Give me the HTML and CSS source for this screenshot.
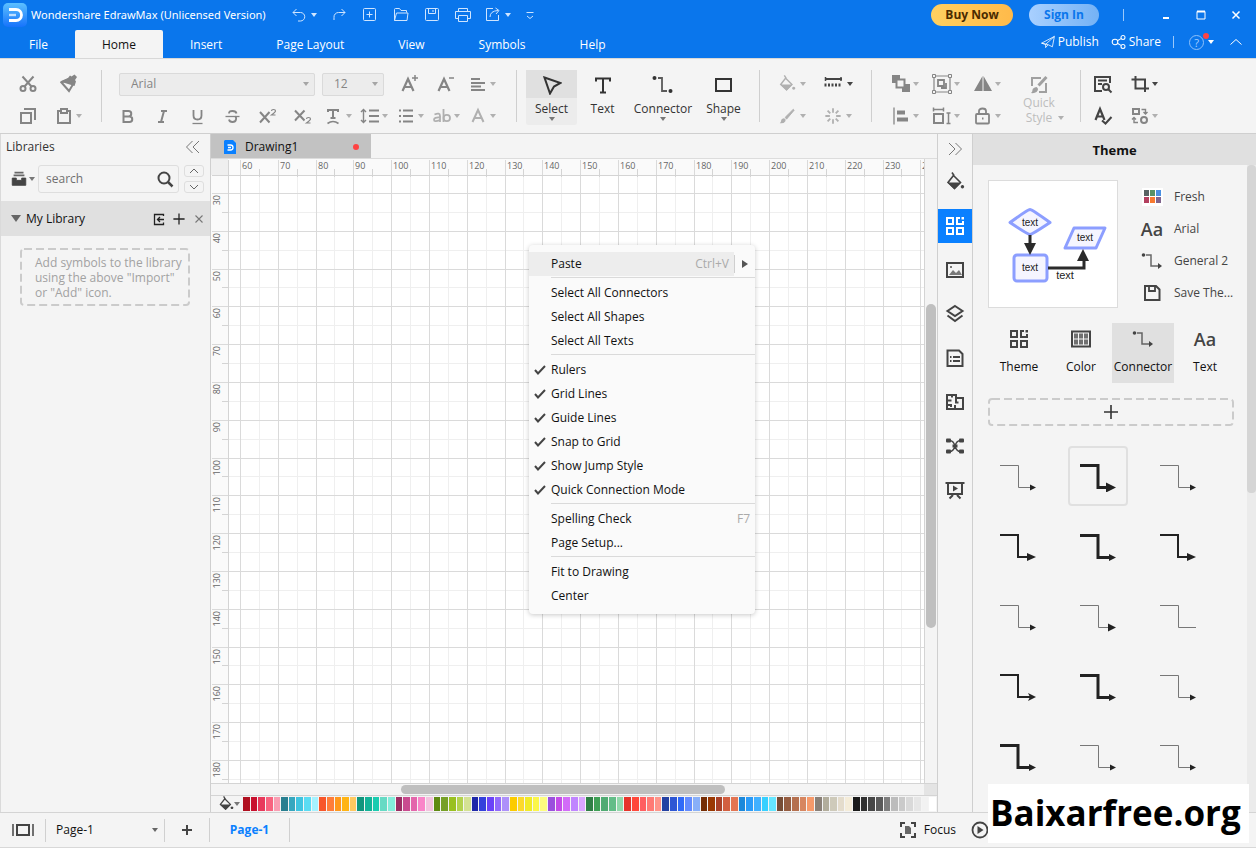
FILE: index.html
```html
<!DOCTYPE html>
<html lang="en">
<head>
<meta charset="utf-8">
<title>Wondershare EdrawMax</title>
<link rel="stylesheet" href="styles.css">
</head>
<body>
<svg class="defs" aria-hidden="true">
  <symbol id="caret" viewBox="0 0 6 4"><path d="M0 0h6L3 4z" fill="currentColor" stroke="none"/></symbol>
  <symbol id="undo" viewBox="0 0 20 20"><path d="M7.500 4L4 7.500 7.500 11M4 7.500h7.500a4 4 0 0 1 0 8.500H9"/></symbol>
  <symbol id="redo" viewBox="0 0 20 20"><path d="M12.500 4L16 7.500 12.500 11M16 7.500H9.500a4.500 4.500 0 0 0-4.500 5V15"/></symbol>
  <symbol id="new" viewBox="0 0 20 20"><rect x="3.500" y="3.500" width="12" height="12" rx="1"/><path d="M9.500 6.500v6M6.500 9.500h6"/></symbol>
  <symbol id="folder" viewBox="0 0 20 20"><path d="M3.500 15.500v-11q0-1 1-1h4l1.500 2h5.500v2M3.500 15.500l2-7.500h11.500l-1 7.500z"/></symbol>
  <symbol id="save" viewBox="0 0 20 20"><rect x="3.500" y="3.500" width="13" height="12" rx="1"/><path d="M6.500 3.500v5h7v-5M11 5v2"/></symbol>
  <symbol id="print" viewBox="0 0 20 20"><path d="M5.500 6.500v-3h9v3M5.500 13.500h-3v-7h15v7h-3M5.500 10.500h9v6h-9z"/></symbol>
  <symbol id="export" viewBox="0 0 20 20"><path d="M10 3.500H3.500v12h12V10M7 12q0-6 8-6.500M12.500 3l3.500 2.500-3 3.500"/></symbol>
  <symbol id="more" viewBox="0 0 20 20"><path d="M6.500 7.500h7M7 11l3 2.500 3-2.500"/></symbol>
  <symbol id="cut" viewBox="0 0 20 20"><g stroke-width="2"><circle cx="5" cy="14.500" r="2.500"/><circle cx="15" cy="14.500" r="2.500"/><path d="M4.500 2.500l9 10M15.500 2.500l-9 10"/></g></symbol>
  <symbol id="painter" viewBox="0 0 20 20"><path d="M3.500 8.500L11 5l4.500 4.500L11 17z" stroke-width="2"/><path d="M2 7.500L10 4l2-2.500 1.500 1L16.500.500 19 3l-2 3 1 1.500L16.500 12z" fill="currentColor" stroke="none"/></symbol>
  <symbol id="copy" viewBox="0 0 20 20"><path d="M3 7h10v10H3zM6 3h11v11" stroke-width="2"/></symbol>
  <symbol id="paste" viewBox="0 0 20 20"><path d="M7 5H4v12h12V5h-3M7 3h6v4H7z" stroke-width="2"/></symbol>
  <symbol id="bigA" viewBox="0 0 20 20"><path d="M2.500 17L8 5l5.500 12M5 13h6" stroke-width="2.200"/><path d="M12 4h6M15 1v6" stroke-width="1.500"/></symbol>
  <symbol id="smallA" viewBox="0 0 20 20"><path d="M2.500 17L8 5l5.500 12M5 13h6" stroke-width="2.200"/><path d="M13 4h5" stroke-width="1.500"/></symbol>
  <symbol id="align" viewBox="0 0 20 20"><path d="M3 5h9M3 9h14M3 12.500h10M3 16h14" stroke-width="1.800"/></symbol>
  <symbol id="bold" viewBox="0 0 20 20"><path d="M5.500 5h5a2.700 2.700 0 0 1 0 5.500h-5zM5.500 10.500h6a2.700 2.700 0 0 1 0 5.500h-6z" stroke-width="2"/></symbol>
  <symbol id="italic" viewBox="0 0 20 20"><path d="M8 5h6M5 16h6M11 5l-3 11" stroke-width="2"/></symbol>
  <symbol id="under" viewBox="0 0 20 20"><path d="M5.500 4v5.500q0 4 4 4t4-4V4" stroke-width="1.800"/><path d="M4.500 17.500h10" stroke-width="1.300"/></symbol>
  <symbol id="strike" viewBox="0 0 20 20"><path d="M13.500 7.500Q13 5 9.500 5 6 5 6 7.500M6 13.500q.500 2.500 3.500 2.500t3.500-2.500-1-2.800" stroke-width="1.800"/><path d="M2.500 10.500h14" stroke-width="1.300"/></symbol>
  <symbol id="sup" viewBox="0 0 20 20"><path d="M2 6l9.500 10.500M11.500 6L2 16.500" stroke-width="2"/><path d="M13.500 5q0-1.500 2-1.500t2 1.500q0 1-4 4h4" stroke-width="1.200"/></symbol>
  <symbol id="sub" viewBox="0 0 20 20"><path d="M2 4.500l9.500 10M11.500 4.500l-9.500 10" stroke-width="2"/><path d="M13.500 13q0-1.500 2-1.500t2 1.500q0 1-4 4h4" stroke-width="1.200"/></symbol>
  <symbol id="tdeco" viewBox="0 0 20 20"><path d="M4 6V4h10v2M9 4v8M6.500 12h5" stroke-width="2"/><path d="M3.500 17.500q5.500-4 11 0" stroke-width="1.600"/></symbol>
  <symbol id="spacing" viewBox="0 0 20 20"><path d="M9 4.500h10M9 10h10M9 15.500h10" stroke-width="1.800"/><path d="M3.500 3.500v13M1 6l2.500-2.500L6 6M1 14l2.500 2.500L6 14" stroke-width="1.400"/></symbol>
  <symbol id="list" viewBox="0 0 20 20"><path d="M7 4.500h10M7 10h10M7 15.500h10M3 4.500h2M3 10h2M3 15.500h2" stroke-width="1.800"/></symbol>
  <symbol id="ab" viewBox="0 0 20 20"><path d="M2.500 8.500Q8 6 8 10v6M8 11.500q-6-.500-6 2.200T8 14M11.500 3v13" stroke-width="1.800"/><circle cx="14.800" cy="12" r="3.200" stroke-width="1.800"/></symbol>
  <symbol id="fontcolor" viewBox="0 0 20 20"><path d="M4.500 16L10 4l5.500 12M6.500 12h7" stroke-width="2"/></symbol>
  <symbol id="cursor" viewBox="0 0 20 20"><path d="M2.500 2.500l16 5.500-6.500 3.500-4 7z" stroke-width="2"/></symbol>
  <symbol id="textT" viewBox="0 0 20 20"><path d="M3 6.500V3.500h14v3M10 3.500v14M7 17.500h6" stroke-width="2"/></symbol>
  <symbol id="conn" viewBox="0 0 24 20"><path d="M7 3h4v13h5" stroke-width="1.800" opacity=".8"/><circle cx="3.500" cy="3" r="2" fill="currentColor" stroke="none"/><circle cx="19.500" cy="16" r="2" fill="currentColor" stroke="none"/></symbol>
  <symbol id="conn2" viewBox="0 0 24 20"><path d="M6 4h5v11h7" stroke-width="1.500" opacity=".8"/><circle cx="3.500" cy="4" r="1.800" fill="currentColor" stroke="none"/><path d="M18 12l4 3-4 3z" fill="currentColor" stroke="none"/></symbol>
  <symbol id="shape" viewBox="0 0 20 20"><rect x="2" y="4" width="15" height="12" stroke-width="2"/></symbol>
  <symbol id="bucket" viewBox="0 0 20 20"><path d="M8.500 3.500l7 7-6 6-6.500-6z" stroke-width="1.600"/><path d="M2.500 10.500h13.500l-6.500 7zM17.500 13a1.700 1.700 0 1 1-.1 0z" fill="currentColor" stroke="none"/><path d="M7 .500l2 3" stroke-width="1.600"/></symbol>
  <symbol id="line" viewBox="0 0 20 20"><path d="M2 5h17" stroke-width="2"/><path d="M1.500 11h17" stroke-width="3" stroke-dasharray="2 1.500"/><path d="M2.500 3v4M18 3v4" stroke-width="1.500"/></symbol>
  <symbol id="brush" viewBox="0 0 20 20"><path d="M17 2.500L8 11.500l1.500 2 8.500-10z" fill="currentColor"/><path d="M6.500 12.500q3 1 1.500 3.500T2 18q1.500-1 1.500-3t3-2.500z" fill="currentColor" stroke="none"/></symbol>
  <symbol id="effects" viewBox="0 0 20 20"><path d="M10 1.500v5M10 13.500v5M1.500 10h5M13.500 10h5M4 4l3 3M13 13l3 3M16 4l-3 3M7 13l-3 3" stroke-width="2"/></symbol>
  <symbol id="arrange" viewBox="0 0 20 20"><path d="M1 1h8v8H1zM11 10h8v8h-8z" fill="currentColor" stroke="none"/><rect x="5.500" y="5.500" width="8" height="8" stroke-width="2" fill="#f4f4f4"/></symbol>
  <symbol id="group" viewBox="0 0 20 20"><path d="M2 2h16v16H2z" stroke-width="1.200"/><path d="M6 6h6v6H6zM14 9v5H9" stroke-width="1.800"/><path d="M.500.500h3v3h-3zM16.500.500h3v3h-3zM.500 16.500h3v3h-3zM16.500 16.500h3v3h-3z" fill="#f4f4f4"/></symbol>
  <symbol id="flip" viewBox="0 0 20 20"><path d="M9.500 2v15H1zM10.500 2v15H19z" fill="currentColor" stroke="none"/></symbol>
  <symbol id="alignleft" viewBox="0 0 20 20"><path d="M3 1.500v17" stroke-width="1.300"/><path d="M6 6.500h8M6 13.500h11" stroke-width="4"/></symbol>
  <symbol id="sizeicon" viewBox="0 0 20 20"><path d="M2 8h9v9H2z" stroke-width="2"/><path d="M1 3.500h11M1.500 1.500v4M11.500 1.500v4M16.500 7v10.500M14.500 7h4M14.500 17.500h4" stroke-width="1.500"/></symbol>
  <symbol id="lock" viewBox="0 0 20 20"><rect x="3" y="8" width="13" height="9.500" rx="1" stroke-width="1.800"/><path d="M6 8V5q0-2.500 3.500-2.500T13 5v3M9 12.500h1.500" stroke-width="1.800"/></symbol>
  <symbol id="quick" viewBox="0 0 20 20"><path d="M12 3H3v8M17 8v9h-7" stroke-width="2"/><path d="M17.500 2L9.500 10.500" stroke-width="3"/><path d="M7.500 12q3 2 0 5-2 1.500-5.500 1 1.500-1 1.500-3t4-3z" fill="currentColor" stroke="none"/></symbol>
  <symbol id="find" viewBox="0 0 20 20"><path d="M9 17H2V3h15v6M5 6.500h9M5 10h4" stroke-width="2"/><circle cx="13" cy="13" r="3" stroke-width="2"/><path d="M15 15l3.500 3.500" stroke-width="2"/></symbol>
  <symbol id="crop" viewBox="0 0 20 20"><path d="M5.500 2v12.500H14M1.500 5.500H15V18M15 14.500h4" stroke-width="2"/></symbol>
  <symbol id="spell" viewBox="0 0 20 20"><path d="M2.500 14L7 3l4.500 11M4 10.500h6" stroke-width="2.200"/><path d="M9 14.500l3.500 3L18.500 11" stroke-width="2"/></symbol>
  <symbol id="replace" viewBox="0 0 20 20"><path d="M3 3h6v5H3z" stroke-width="2"/><circle cx="14" cy="14" r="3" stroke-width="2"/><path d="M11.500 3.500h4V7M13.500 6l2 2 2-2M8 16.500H4V12M2 13.500l2-2 2 2" stroke-width="1.400"/></symbol>
  <symbol id="plane" viewBox="0 0 20 20"><path d="M2 11.500L18 3l-2.500 13-5-2.500zM18 3L7 13v4l3-3.500M7 13l-5-1.500"/></symbol>
  <symbol id="share" viewBox="0 0 20 20"><g stroke-width="1.300"><circle cx="5" cy="10" r="3.500"/><circle cx="15" cy="4.500" r="2.500"/><circle cx="15" cy="15.500" r="2.500"/><path d="M8 8.500l4.500-2.700M8 11.500l4.500 2.700"/></g></symbol>
  <symbol id="chev-up" viewBox="0 0 20 20"><path d="M4.500 12.500L10 7.500l5.500 5"/></symbol>
  <symbol id="dchev-l" viewBox="0 0 20 20"><path d="M9.500 4l-6 6 6 6M16 4l-6 6 6 6"/></symbol>
  <symbol id="dchev-r" viewBox="0 0 20 20"><path d="M4 4l6 6-6 6M10.500 4l6 6-6 6"/></symbol>
  <symbol id="drawer" viewBox="0 0 20 20"><path d="M5 3h10M4 6h12" stroke-width="2" opacity=".8"/><path d="M2.500 9H7v2.500h6V9h4.500v8h-15z" fill="currentColor" stroke="currentColor"/></symbol>
  <symbol id="search" viewBox="0 0 20 20"><circle cx="9" cy="9" r="5.500" stroke-width="2"/><path d="M13 13l4.500 4.500" stroke-width="2.500"/></symbol>
  <symbol id="import" viewBox="0 0 20 20"><path d="M14.500 7V5.500h-9v10h9V13.500M15 10.500H9M11 8l-2.500 2.500L11 13" stroke-width="1.300"/></symbol>
  <symbol id="plus" viewBox="0 0 20 20"><path d="M10 3v14M3 10h14" stroke-width="1.600"/></symbol>
  <symbol id="cross" viewBox="0 0 20 20"><path d="M3 3l14 14M17 3L3 17" stroke-width="2.200"/></symbol>
  <symbol id="check" viewBox="0 0 12 12"><path d="M1 6l3 3.500L11 2" stroke-width="2"/></symbol>
  <symbol id="grid4" viewBox="0 0 20 20"><path d="M2 2h6v6H2zM2 12h6v6H2zM12 12h6v6h-6zM15 2h-3v6h6V5" stroke-width="2"/><path d="M16.500 1H19v2.500h-2.500z" fill="currentColor" stroke="none"/></symbol>
  <symbol id="image" viewBox="0 0 20 20"><path d="M2 3h16v14H2z" stroke-width="2"/><path d="M4 15l4-5 3 3 3-3 3 5zM5 6h2v2H5z" fill="currentColor" stroke="none" opacity=".7"/></symbol>
  <symbol id="layers" viewBox="0 0 20 20"><path d="M10 2l7.500 5-7.500 5-7.500-5zM2.500 11.500L10 17l7.500-5.500" stroke-width="2"/></symbol>
  <symbol id="doc" viewBox="0 0 20 20"><path d="M2.500 2.500H14l3.500 3.500v12h-15z" stroke-width="2"/><path d="M5 9h1.500M8 9h7M5 13h1.500M8 13h7" stroke-width="1.800"/></symbol>
  <symbol id="plan" viewBox="0 0 20 20"><path d="M2 3h9v3h7v11H2zM2 8.500h4.500M7 3v2.500M11 6v4.500h2.500M2 13h4v2M10 17v-4" stroke-width="2"/></symbol>
  <symbol id="mind" viewBox="0 0 20 20"><path d="M4.500 4.500q4 0 5.500 5.500-1.500 5.500-5.500 5.500M15.500 4.500q-4 0-5.500 5.500 1.500 5.500 5.500 5.500" stroke-width="1.400"/><g fill="currentColor" stroke="none"><rect x="1" y="2.500" width="5" height="4" rx="1"/><rect x="14" y="2.500" width="5" height="4" rx="1"/><rect x="1" y="13.500" width="5" height="4" rx="1"/><rect x="14" y="13.500" width="5" height="4" rx="1"/><rect x="7.500" y="8.500" width="5" height="3"/></g></symbol>
  <symbol id="present" viewBox="0 0 20 20"><path d="M.500 3h19M3 3v11h14V3M8 15l-3.500 3.500M12 15l3.500 3.500" stroke-width="2"/><path d="M8 5.500l5 3-5 3z" fill="currentColor" stroke="none"/></symbol>
  <symbol id="disk" viewBox="0 0 20 20"><path d="M3 3h11l3.500 3.500V17H3z" stroke-width="2"/><path d="M7 3v5h6V3" stroke-width="1.800"/></symbol>
  <symbol id="table" viewBox="0 0 20 20"><path d="M1 2.500h18v15H1z" stroke-width="2"/><path d="M3 4.500h4v5H3zM8 4.500h4v5H8zM13 4.500h4v5h-4zM3 10.500h4v5H3zM8 10.500h4v5H8zM13 10.500h4v5h-4z" fill="currentColor" stroke="none" opacity=".75"/></symbol>
  <symbol id="pages" viewBox="0 0 24 20"><path d="M6 5h12v10H6z" stroke-width="2"/><path d="M2 4v12M22 4v12" stroke-width="1.500"/></symbol>
  <symbol id="focus" viewBox="0 0 20 20"><path d="M3 7V3h4M13 3h4v4M17 13v4h-4M7 17H3v-4" stroke-width="2"/><path d="M7 6h4l2 2v6H7z" fill="currentColor" stroke="none" opacity=".8"/></symbol>
  <symbol id="play" viewBox="0 0 20 20"><circle cx="10" cy="10" r="7.500" stroke-width="1.800"/><path d="M7.500 6l6 4-6 4z" fill="currentColor" stroke="none"/></symbol>
  <symbol id="c-thin" viewBox="0 0 36 32"><path d="M0 5.500h18.500v22H31" stroke="#777"/><path d="M30 24.500l6 3-6 3z" class="head"/></symbol>
  <symbol id="c-thin-mid" viewBox="0 0 36 32"><path d="M0 5.500h18.500v22H31" stroke="#777"/><path d="M28 23.500l8 4-8 4z" class="head"/></symbol>
  <symbol id="c-thin-none" viewBox="0 0 36 32"><path d="M0 5.500h18.500v22H36" stroke="#777"/></symbol>
  <symbol id="c-mid" viewBox="0 0 36 32"><path d="M0 5h18v22h13" stroke="#222" stroke-width="2"/><path d="M27 23l9 4-9 4z" class="head"/></symbol>
  <symbol id="c-barb" viewBox="0 0 36 32"><path d="M0 5h18v22h13" stroke="#222" stroke-width="2"/><path d="M28 23l8 4-8 4 2-4z" class="head"/></symbol>
  <symbol id="c-bold" viewBox="0 0 36 32"><path d="M0 5.500h18v22h13" stroke="#222" stroke-width="3"/><path d="M29 24l7 3.500-7 3.500z" class="head"/></symbol>
  <symbol id="c-heavy" viewBox="0 0 36 32"><path d="M0 5.500h18v22h13" stroke="#222" stroke-width="3"/><path d="M26 22.500l10 5-10 5z" class="head"/></symbol>
</svg>

<header class="top">
  <div class="titlebar">
    <svg class="logo" viewBox="0 0 24 24"><defs><linearGradient id="lg" x2="0" y2="1"><stop offset="0" stop-color="#5cc0ff"/><stop offset="1" stop-color="#1673fb"/></linearGradient></defs><rect width="24" height="24" rx="5" fill="url(#lg)" stroke="none"/><path d="M6 6.500h7a5.300 5.300 0 0 1 0 11H6" stroke="#fff" stroke-width="2.800"/><path d="M6 12h7" stroke="#bfe0ff" stroke-width="2.400"/></svg>
    <h1 class="title">Wondershare EdrawMax (Unlicensed Version)</h1>
    <div class="quick">
      <button class="q split" aria-label="Undo"><svg class="i"><use href="#undo"/></svg><svg class="caret"><use href="#caret"/></svg></button>
      <button class="q" aria-label="Redo"><svg class="i"><use href="#redo"/></svg></button>
      <button class="q" aria-label="New"><svg class="i"><use href="#new"/></svg></button>
      <button class="q" aria-label="Open"><svg class="i"><use href="#folder"/></svg></button>
      <button class="q" aria-label="Save"><svg class="i"><use href="#save"/></svg></button>
      <button class="q" aria-label="Print"><svg class="i"><use href="#print"/></svg></button>
      <button class="q split out" aria-label="Export"><svg class="i"><use href="#export"/></svg><svg class="caret"><use href="#caret"/></svg></button>
      <button class="q" aria-label="Customize"><svg class="i"><use href="#more"/></svg></button>
    </div>
    <div class="account">
      <button class="pill buy">Buy Now</button>
      <button class="pill sign">Sign In</button>
      <span class="bar"></span>
      <button class="win" aria-label="Minimize"><svg class="w" viewBox="0 0 10 10"><path d="M2 8h6" stroke-width="2"/></svg></button>
      <button class="win" aria-label="Maximize"><svg class="w" viewBox="0 0 10 10"><path d="M1 1.500h8v7.500H1z"/><path d="M1 1.500h8" stroke-width="2"/></svg></button>
      <button class="win" aria-label="Close"><svg class="w" viewBox="0 0 10 10"><path d="M1.500 1.500l7 7M8.500 1.500l-7 7" stroke-width="1.500"/></svg></button>
    </div>
  </div>
  <div class="menubar">
    <nav class="tabs">
      <button class="tab">File</button><button class="tab on">Home</button><button class="tab">Insert</button><button class="tab">Page Layout</button><button class="tab">View</button><button class="tab">Symbols</button><button class="tab">Help</button>
    </nav>
    <div class="share">
      <button class="sh"><svg class="i16"><use href="#plane"/></svg>Publish</button>
      <button class="sh"><svg class="i16"><use href="#share"/></svg>Share</button>
      <span class="bar"></span>
      <button class="help" aria-label="Help"><span class="qm">?</span><span class="dot"></span><svg class="caret"><use href="#caret"/></svg></button>
      <button class="sh" aria-label="Collapse ribbon"><svg class="i"><use href="#chev-up"/></svg></button>
    </div>
  </div>
</header>

<section class="ribbon" aria-label="Home tools">
  <div class="group clip">
    <div class="row"><button class="b" aria-label="Cut"><svg class="i"><use href="#cut"/></svg></button><button class="b" aria-label="Format painter"><svg class="i"><use href="#painter"/></svg></button></div>
    <div class="row"><button class="b" aria-label="Copy"><svg class="i"><use href="#copy"/></svg></button><button class="b" aria-label="Paste"><svg class="i"><use href="#paste"/></svg><svg class="caret"><use href="#caret"/></svg></button></div>
  </div>
  <div class="group font">
    <div class="row first">
      <span class="sel face"><select aria-label="Font"><option>Arial</option></select></span>
      <span class="sel size"><select aria-label="Font size"><option>12</option></select></span>
      <button class="b m" aria-label="Grow font"><svg class="i"><use href="#bigA"/></svg></button>
      <button class="b m" aria-label="Shrink font"><svg class="i"><use href="#smallA"/></svg></button>
      <button class="b m" aria-label="Align"><svg class="i"><use href="#align"/></svg><svg class="caret"><use href="#caret"/></svg></button>
    </div>
    <div class="row">
      <button class="b n" aria-label="Bold"><svg class="i"><use href="#bold"/></svg></button>
      <button class="b n" aria-label="Italic"><svg class="i"><use href="#italic"/></svg></button>
      <button class="b n" aria-label="Underline"><svg class="i"><use href="#under"/></svg></button>
      <button class="b n" aria-label="Strikethrough"><svg class="i"><use href="#strike"/></svg></button>
      <button class="b n" aria-label="Superscript"><svg class="i"><use href="#sup"/></svg></button>
      <button class="b n" aria-label="Subscript"><svg class="i"><use href="#sub"/></svg></button>
      <button class="b m" aria-label="Text effects"><svg class="i"><use href="#tdeco"/></svg><svg class="caret"><use href="#caret"/></svg></button>
      <button class="b m" aria-label="Line spacing"><svg class="i"><use href="#spacing"/></svg><svg class="caret"><use href="#caret"/></svg></button>
      <button class="b m" aria-label="Bullets"><svg class="i"><use href="#list"/></svg><svg class="caret"><use href="#caret"/></svg></button>
      <button class="b m pale" aria-label="Case"><svg class="i"><use href="#ab"/></svg><svg class="caret"><use href="#caret"/></svg></button>
      <button class="b m pale" aria-label="Font color"><svg class="i"><use href="#fontcolor"/></svg><svg class="caret"><use href="#caret"/></svg></button>
    </div>
  </div>
  <div class="group tools">
    <button class="tool on"><span class="ti"><svg class="i"><use href="#cursor"/></svg></span>Select<svg class="caret"><use href="#caret"/></svg></button>
    <button class="tool"><span class="ti"><svg class="i"><use href="#textT"/></svg></span>Text</button>
    <button class="tool wide"><span class="ti"><svg class="i24"><use href="#conn"/></svg></span>Connector<svg class="caret"><use href="#caret"/></svg></button>
    <button class="tool"><span class="ti"><svg class="i"><use href="#shape"/></svg></span>Shape<svg class="caret"><use href="#caret"/></svg></button>
  </div>
  <div class="group paint">
    <div class="row"><button class="b l pale" aria-label="Fill"><svg class="i18"><use href="#bucket"/></svg><svg class="caret"><use href="#caret"/></svg></button><button class="b l dark" aria-label="Line style"><svg class="i"><use href="#line"/></svg><svg class="caret"><use href="#caret"/></svg></button></div>
    <div class="row"><button class="b l pale" aria-label="Line color"><svg class="i18"><use href="#brush"/></svg><svg class="caret"><use href="#caret"/></svg></button><button class="b l pale" aria-label="Effects"><svg class="i18"><use href="#effects"/></svg><svg class="caret"><use href="#caret"/></svg></button></div>
  </div>
  <div class="group arrange">
    <div class="stack">
      <div class="row"><button class="b" aria-label="Bring forward"><svg class="i"><use href="#arrange"/></svg><svg class="caret"><use href="#caret"/></svg></button><button class="b" aria-label="Group"><svg class="i"><use href="#group"/></svg><svg class="caret"><use href="#caret"/></svg></button><button class="b" aria-label="Flip"><svg class="i"><use href="#flip"/></svg><svg class="caret"><use href="#caret"/></svg></button></div>
      <div class="row"><button class="b" aria-label="Align shapes"><svg class="i"><use href="#alignleft"/></svg><svg class="caret"><use href="#caret"/></svg></button><button class="b" aria-label="Size"><svg class="i"><use href="#sizeicon"/></svg><svg class="caret"><use href="#caret"/></svg></button><button class="b" aria-label="Lock"><svg class="i"><use href="#lock"/></svg><svg class="caret"><use href="#caret"/></svg></button></div>
    </div>
    <button class="qs"><svg class="i"><use href="#quick"/></svg><span>Quick</span><span class="st">Style <svg class="caret"><use href="#caret"/></svg></span></button>
  </div>
  <div class="group edit">
    <div class="row"><button class="b dark" aria-label="Find"><svg class="i"><use href="#find"/></svg></button><button class="b dark" aria-label="Crop"><svg class="i"><use href="#crop"/></svg><svg class="caret"><use href="#caret"/></svg></button></div>
    <div class="row"><button class="b dark" aria-label="Spelling"><svg class="i"><use href="#spell"/></svg></button><button class="b" aria-label="Replace"><svg class="i"><use href="#replace"/></svg><svg class="caret"><use href="#caret"/></svg></button></div>
  </div>
</section>

<main class="work">
  <aside class="left">
    <div class="lhead"><h2>Libraries</h2><button class="ib" aria-label="Collapse"><svg class="i"><use href="#dchev-l"/></svg></button></div>
    <div class="lsearch">
      <button class="ib lib" aria-label="Library menu"><svg class="i18"><use href="#drawer"/></svg><svg class="caret"><use href="#caret"/></svg></button>
      <label class="box"><input type="text" placeholder="search" aria-label="Search libraries"><svg class="i"><use href="#search"/></svg></label>
      <div class="spin"><button aria-label="Previous"><svg viewBox="0 0 10 6"><path d="M1 5l4-4 4 4"/></svg></button><button aria-label="Next"><svg viewBox="0 0 10 6"><path d="M1 1l4 4 4-4"/></svg></button></div>
    </div>
    <div class="lbar"><svg class="tri" viewBox="0 0 10 7"><path d="M0 0h10L5 7z" fill="#666" stroke="none"/></svg><h3>My Library</h3>
      <button class="ib" aria-label="Import"><svg class="i"><use href="#import"/></svg></button><button class="ib" aria-label="Add"><svg class="i16"><use href="#plus"/></svg></button><button class="ib x" aria-label="Close"><svg><use href="#cross"/></svg></button></div>
    <div class="drop"><svg class="dash"><rect x="1" y="1" rx="3"/></svg><p>Add symbols to the library<br>using the above "Import"<br>or "Add" icon.</p></div>
  </aside>

  <section class="doc">
    <div class="doctabs"><button class="doctab"><svg class="dicon" viewBox="0 0 12 14"><path d="M1 0h8l3 3v11H0V1z" fill="#0a80ff" stroke="none"/><path d="M3.500 5h3a2.200 2.200 0 0 1 0 5h-3M4 7.500h3" stroke="#fff" stroke-width="1.300"/></svg><span>Drawing1</span><i class="unsaved"></i></button></div>
    <div class="view">
      <div class="sheet"><svg id="sheet" aria-label="Drawing page"></svg></div>
      <div class="vbar"><div class="vthumb"></div></div>
    </div>
    <div class="hrow"><div class="hbar"><div class="hthumb"></div></div><div class="corner"></div></div>
    <div class="palette"><button class="ib" aria-label="Fill color"><svg class="i16"><use href="#bucket"/></svg><svg class="caret"><use href="#caret"/></svg></button><div class="swatches" id="swatches"></div></div>
    <div class="menu" role="menu">
      <div class="mrow"><button class="mi hot" role="menuitem"><span>Paste</span><kbd>Ctrl+V</kbd></button><button class="sub" aria-label="Paste options"><svg viewBox="0 0 6 8"><path d="M0 0l6 4-6 4z" fill="#555" stroke="none"/></svg></button></div>
      <hr>
      <button class="mi" role="menuitem"><span>Select All Connectors</span></button>
      <button class="mi" role="menuitem"><span>Select All Shapes</span></button>
      <button class="mi" role="menuitem"><span>Select All Texts</span></button>
      <hr>
      <button class="mi" role="menuitemcheckbox" aria-checked="true"><svg class="ck"><use href="#check"/></svg><span>Rulers</span></button>
      <button class="mi" role="menuitemcheckbox" aria-checked="true"><svg class="ck"><use href="#check"/></svg><span>Grid Lines</span></button>
      <button class="mi" role="menuitemcheckbox" aria-checked="true"><svg class="ck"><use href="#check"/></svg><span>Guide Lines</span></button>
      <button class="mi" role="menuitemcheckbox" aria-checked="true"><svg class="ck"><use href="#check"/></svg><span>Snap to Grid</span></button>
      <button class="mi" role="menuitemcheckbox" aria-checked="true"><svg class="ck"><use href="#check"/></svg><span>Show Jump Style</span></button>
      <button class="mi" role="menuitemcheckbox" aria-checked="true"><svg class="ck"><use href="#check"/></svg><span>Quick Connection Mode</span></button>
      <hr>
      <button class="mi" role="menuitem"><span>Spelling Check</span><kbd>F7</kbd></button>
      <button class="mi" role="menuitem"><span>Page Setup...</span></button>
      <hr>
      <button class="mi" role="menuitem"><span>Fit to Drawing</span></button>
      <button class="mi" role="menuitem"><span>Center</span></button>
    </div>
  </section>

  <nav class="strip">
    <button class="s first" aria-label="Collapse"><svg class="i"><use href="#dchev-r"/></svg></button>
    <button class="s fill" aria-label="Fill"><svg class="i"><use href="#bucket"/></svg></button>
    <button class="s on" aria-label="Theme"><svg class="i"><use href="#grid4"/></svg></button>
    <button class="s" aria-label="Image"><svg class="i"><use href="#image"/></svg></button>
    <button class="s" aria-label="Layers"><svg class="i"><use href="#layers"/></svg></button>
    <button class="s" aria-label="Page"><svg class="i"><use href="#doc"/></svg></button>
    <button class="s" aria-label="Floor plan"><svg class="i"><use href="#plan"/></svg></button>
    <button class="s" aria-label="Mind map"><svg class="i"><use href="#mind"/></svg></button>
    <button class="s" aria-label="Presentation"><svg class="i"><use href="#present"/></svg></button>
  </nav>

  <aside class="right">
    <h2 class="rhead">Theme</h2>
    <div class="rbody">
      <div class="rcontent">
        <div class="now">
          <svg class="preview" viewBox="0 0 130 128">
            <g fill="#f5f5ff" stroke="#8c9eff" stroke-width="3" stroke-linejoin="round"><path d="M42 29.500Q44 29.500 62 42.500 44 54.500 42 54.500T22 42.500Q40 29.500 42 29.500z"/><rect x="26" y="75" width="33" height="26" rx="3"/><path d="M86 48h31l-9 20H77z"/></g>
            <g stroke="#2b2b2b" stroke-width="3"><path d="M42 55v12M60 88h36V76"/></g>
            <path d="M36 63h12l-6 12zM89 81l6-12 6 12z" fill="#2b2b2b" stroke="none"/>
            <g class="pt"><text x="42" y="46">text</text><text x="42" y="91">text</text><text x="97" y="61">text</text><text x="77" y="99" class="lg">text</text></g>
          </svg>
          <div class="opts">
            <button class="o"><svg class="i24" viewBox="0 0 24 20"><g stroke="none"><path fill="#fff" d="M2 1h21v18H2z"/><path fill="#586262" d="M4 3h5v6H4z"/><path fill="#579166" d="M10 3h5v6h-5z"/><path fill="#4a90e2" d="M16 3h5v6h-5z"/><path fill="#b3405f" d="M4 10h5v6H4z"/><path fill="#f87a30" d="M10 10h5v6h-5z"/><path fill="#80648c" d="M16 10h5v6h-5z"/></g></svg>Fresh</button>
            <button class="o"><span class="aa">Aa</span>Arial</button>
            <button class="o"><svg class="i24"><use href="#conn2"/></svg>General 2</button>
            <button class="o"><svg class="i24"><use href="#disk"/></svg>Save The...</button>
          </div>
        </div>
        <div class="kinds">
          <button class="k"><svg class="i"><use href="#grid4"/></svg>Theme</button>
          <button class="k"><svg class="i"><use href="#table"/></svg>Color</button>
          <button class="k on"><svg class="i24"><use href="#conn2"/></svg>Connector</button>
          <button class="k"><span class="aa">Aa</span>Text</button>
        </div>
        <button class="add" aria-label="Add connector style"><svg class="dash"><rect x="1" y="1" rx="3"/></svg><svg class="i"><use href="#plus"/></svg></button>
        <div class="gallery">
          <button class="g" aria-label="Style 1"><svg><use href="#c-thin"/></svg></button><button class="g on" aria-label="Style 2"><svg><use href="#c-heavy"/></svg></button><button class="g" aria-label="Style 3"><svg><use href="#c-thin"/></svg></button>
          <button class="g" aria-label="Style 4"><svg><use href="#c-mid"/></svg></button><button class="g" aria-label="Style 5"><svg><use href="#c-bold"/></svg></button><button class="g" aria-label="Style 6"><svg><use href="#c-mid"/></svg></button>
          <button class="g" aria-label="Style 7"><svg><use href="#c-thin"/></svg></button><button class="g" aria-label="Style 8"><svg><use href="#c-thin-mid"/></svg></button><button class="g" aria-label="Style 9"><svg><use href="#c-thin-none"/></svg></button>
          <button class="g" aria-label="Style 10"><svg><use href="#c-barb"/></svg></button><button class="g" aria-label="Style 11"><svg><use href="#c-bold"/></svg></button><button class="g" aria-label="Style 12"><svg><use href="#c-thin"/></svg></button>
          <button class="g" aria-label="Style 13"><svg><use href="#c-bold"/></svg></button><button class="g" aria-label="Style 14"><svg><use href="#c-thin"/></svg></button><button class="g" aria-label="Style 15"><svg><use href="#c-thin"/></svg></button>
        </div>
      </div>
      <div class="rbar"><div class="rthumb"></div></div>
    </div>
  </aside>
</main>

<footer class="status">
  <button class="ib pg" aria-label="Page view"><svg class="i24"><use href="#pages"/></svg></button>
  <span class="sel page"><select aria-label="Page"><option>Page-1</option></select></span>
  <button class="ib addp" aria-label="Add page"><svg viewBox="0 0 14 14"><path d="M7 2v10M2 7h10" stroke-width="2"/></svg></button>
  <button class="ptab">Page-1</button>
  <div class="sright"><button class="ib fo"><svg class="i"><use href="#focus"/></svg>Focus</button><button class="ib" aria-label="Play"><svg class="i"><use href="#play"/></svg></button></div>
</footer>
<div class="mark">Baixarfree.org</div>
<script src="script.js"></script>
</body>
</html>
```
FILE: styles.css
```css
* { box-sizing: border-box; }
body {
  margin: 0;
  height: 100vh;
  display: flex;
  flex-direction: column;
  overflow: hidden;
  position: relative;
  background: #f4f4f4;
  color: #111;
  font: 12px/16px "Open Sans", "Noto Sans", sans-serif;
}
button, input, select { font: inherit; color: inherit; border: 0; background: none; padding: 0; margin: 0; }
h1, h2, h3, p { margin: 0; font-size: 12px; font-weight: 400; }
svg { fill: none; stroke: currentColor; flex: none; }
.defs { position: absolute; width: 0; height: 0; }
.head { fill: #222; stroke: none; }
.i { width: 20px; height: 20px; }
.i16 { width: 16px; height: 16px; }
.i18 { width: 18px; height: 18px; }
.i24 { width: 24px; height: 20px; }
.caret { width: 6px; height: 4px; }
.ib { display: flex; align-items: center; justify-content: center; color: #444; }

/* title bar and tabs */
.top { background: #0a76ec; color: #fff; flex: none; }
.titlebar { display: flex; align-items: center; height: 30px; padding: 0 3px; }
.logo { width: 24px; height: 24px; }
.title { width: 262px; padding-left: 4px; white-space: nowrap; font-family: "Noto Sans", sans-serif; font-size: 11px; }
.quick { display: flex; align-items: center; flex: 1; color: #cfe5ff; }
.q { width: 31px; height: 24px; display: flex; align-items: center; justify-content: center; }
.q.split { width: 34px; justify-content: flex-start; gap: 2px; }
.q.out { width: 36px; padding-left: 5px; }
.account { display: flex; align-items: center; }
.pill { height: 22px; border-radius: 11px; font-weight: 700; margin-right: 16px; }
.buy { width: 82px; color: #4a2b00; background: linear-gradient(90deg, #ffd060, #ffba4a); }
.sign { width: 70px; color: #0a76ec; background: linear-gradient(90deg, #a9d0ff, #74b2f5); }
.bar { width: 1px; height: 12px; margin: 0 8px; background: #9bc8fa; }
.account .bar { margin-right: 24px; }
.win { width: 35px; height: 24px; display: flex; align-items: center; justify-content: center; }
.w { width: 10px; height: 10px; }
.menubar { display: flex; justify-content: space-between; height: 28px; }
.tabs { display: flex; padding-left: 2px; }
.tab { padding: 2px 27px 0; border-radius: 2px 2px 0 0; }
.tab.on { background: #f4f4f4; color: #111; }
.share { display: flex; align-items: center; padding: 0 10px 4px 0; gap: 12px; }
.sh { display: flex; align-items: center; gap: 2px; }
.share .bar { margin: 0 3px 0 0; }
.help { display: flex; align-items: center; gap: 4px; position: relative; }
.qm { width: 15px; height: 15px; border: 1px solid #8fc1fa; border-radius: 50%; color: #a9d0ff; line-height: 13px; font-size: 11px; }
.dot { position: absolute; top: -2px; left: 14px; width: 6px; height: 6px; border-radius: 50%; background: #ff4343; }

/* ribbon */
.ribbon { display: flex; flex: none; padding: 11px 0 3px; border-top: 1px solid #d8d8d8; border-bottom: 1px solid #cfcfcf; color: #858585; }
.group { display: flex; flex-direction: column; gap: 4px; }
.group + .group { background: linear-gradient(#cfcfcf, #cfcfcf) 0 0 / 1px 52px no-repeat; }
.row { display: flex; align-items: center; height: 28px; }
.b { width: 41px; height: 28px; display: flex; align-items: center; justify-content: center; gap: 2px; }
.b .caret, .qs .caret { color: #b0b0b0; }
.clip { padding: 0 13px 0 8px; }
.clip .b { width: 40px; }
.font { padding: 0 16px 0 9px; }
.row.first { padding-left: 9px; }
.b.n { width: 35px; }
.b.m { width: 36px; }
.b.l { width: 46px; gap: 4px; }
.pale { color: #b0b0b0; }
.dark, .dark .caret { color: #444; }
.sel { display: grid; align-items: center; }
.sel::after { content: ""; grid-area: 1 / 1; justify-self: end; margin-right: 6px; width: 6px; height: 4px; background: #a5a5a5; clip-path: polygon(0 0, 100% 0, 50% 100%); pointer-events: none; }
.sel select { grid-area: 1 / 1; width: 100%; height: 23px; appearance: none; padding-left: 12px; }
.face, .size { border-radius: 2px; background: #ececec; outline: 1px solid #dadada; outline-offset: -1px; }
.face { width: 196px; margin-right: 7px; }
.size { width: 62px; margin-right: 8px; }
.group.tools { flex-direction: row; gap: 0; padding: 0 10px; }
.tool { width: 51px; height: 55px; display: flex; flex-direction: column; align-items: center; color: #333; }
.tool.wide { width: 70px; }
.ti { align-self: stretch; display: flex; align-items: center; justify-content: center; height: 28px; margin-bottom: 3px; padding-top: 2px; }
.tool.on { background: #ececec; border-radius: 2px; }
.tool.on .ti { background: #e0e0e0; }
.tool .caret { color: #777; }
.paint { padding: 0 10px; }
.group.arrange { flex-direction: row; padding: 0 7px 0 13px; }
.stack { display: flex; flex-direction: column; gap: 4px; }
.qs { width: 62px; display: flex; flex-direction: column; align-items: center; color: #bdbdbd; line-height: 15px; padding: 5px 6px 0 0; }
.qs .i { color: #a0a0a0; }
.st { display: flex; align-items: center; gap: 6px; padding-left: 12px; }
.edit { padding-left: 2px; }

/* work area */
.work { flex: 1; min-height: 0; display: flex; }
.left { width: 211px; border-right: 1px solid #cfcfcf; border-left: 1px solid #dadada; flex: none; }
.lhead { display: flex; justify-content: space-between; align-items: center; height: 26px; padding: 0 7px 0 5px; color: #333; }
.lhead .ib { color: #777; }
.lsearch { display: flex; align-items: center; gap: 4px; height: 41px; padding: 0 6px 4px 10px; }
.lib { gap: 1px; width: 23px; }
.lib .caret { color: #777; }
.box { flex: 1; min-width: 0; height: 28px; display: flex; align-items: center; border: 1px solid #dedede; border-radius: 3px; padding: 0 3px 0 7px; color: #444; }
.box input { flex: 1; width: 0; min-width: 0; outline: 0; }
.box input::placeholder { color: #707070; opacity: 1; }
.spin { display: flex; flex-direction: column; gap: 4px; margin-left: 1px; }
.spin button { width: 20px; height: 12px; display: flex; align-items: center; justify-content: center; border: 1px solid #dedede; border-radius: 3px; color: #666; }
.spin svg { width: 10px; height: 6px; }
.lbar { display: flex; align-items: center; height: 35px; padding: 0 1px 0 10px; background: #e0e0e0; }
.tri { width: 10px; height: 7px; margin-right: 5px; }
.lbar h3 { flex: 1; }
.lbar .ib { width: 20px; color: #222; }
.lbar .x { color: #777; }
.x svg { width: 10px; height: 10px; }
.drop { margin: 12px 20px 0 19px; display: grid; }
.drop p { grid-area: 1 / 1; padding: 7px 0 6px 15px; line-height: 15px; color: #a2a2a2; white-space: nowrap; }
.dash { grid-area: 1 / 1; width: 100%; height: 0; min-height: 100%; color: #cbcbcb; }
.dash rect { width: calc(100% - 2px); height: calc(100% - 2px); stroke-width: 2; stroke-dasharray: 8 4; }

.doc { flex: 1; min-width: 0; display: flex; flex-direction: column; position: relative; }
.doctabs { height: 25px; border-bottom: 1px solid #dcdcdc; display: flex; flex: none; }
.doctab { width: 160px; background: #c2c2c2; display: flex; align-items: center; padding: 1px 12px 0 13px; gap: 9px; color: #111; }
.doctab span { flex: 1; text-align: left; }
.dicon { width: 12px; height: 14px; }
.unsaved { width: 6px; height: 6px; border-radius: 50%; background: #ff4343; }
.view { flex: 1; min-height: 0; display: flex; }
.sheet { flex: 1; min-width: 0; overflow: hidden; background: #fff; }
.sheet svg { display: block; width: 100%; height: 100%; shape-rendering: crispEdges; }
.sheet text { font: 9px "Open Sans", sans-serif; fill: #666; stroke: none; }
.sheet .band { fill: #fafafa; stroke: none; }
.sheet .nook { fill: #efefef; stroke: none; }
.sheet .major { stroke: #dadada; }
.sheet .minor { stroke: #efefef; }
.sheet .tick { stroke: #d4d4d4; }
.vbar { width: 13px; border-left: 1px solid #d4d4d4; padding-left: 1px; }
.vthumb { width: 10px; height: 52%; margin-top: 145px; border-radius: 5px; background: #bfbfbf; }
.hrow { display: flex; height: 13px; border-top: 1px solid #d4d4d4; border-bottom: 1px solid #d4d4d4; }
.hbar { flex: 1; padding: 1px 0; }
.hthumb { width: 324px; height: 9px; margin-left: 190px; border-radius: 5px; background: #bfbfbf; }
.corner { width: 13px; background: #e4e4e4; }
.palette { display: flex; height: 16px; flex: none; }
.palette .ib { width: 32px; padding-left: 4px; }
.palette .caret { color: #777; }
.swatches { flex: 1; display: flex; gap: 1px; padding: 1px 1px 1px 0; }
.swatches span { flex: 1; }

.menu { position: absolute; left: 318px; top: 111px; width: 226px; padding: 7px 0 6px; background: #fafafa; border-radius: 4px; box-shadow: 0 1px 5px rgba(0, 0, 0, .22); color: #111; }
.mi { width: 100%; height: 24px; display: flex; align-items: center; padding: 0 5px 0 22px; position: relative; }
.mi span { flex: 1; text-align: left; }
.menu hr { margin: 1px 0 3px 22px; border: 0; height: 1px; background: #dadada; }
.menu kbd { font: inherit; color: #aaa; }
.mrow { display: flex; align-items: center; }
.mi.hot { flex: 1; background: #ededed; }
.sub { width: 21px; height: 18px; border-left: 1px solid #cfcfcf; display: flex; align-items: center; justify-content: center; }
.sub svg { width: 6px; height: 8px; }
.ck { position: absolute; left: 5px; width: 12px; height: 12px; color: #444; }

.strip { width: 36px; flex: none; border-left: 1px solid #cfcfcf; border-right: 1px solid #cfcfcf; display: flex; flex-direction: column; gap: 10px; color: #444; }
.s { height: 34px; display: flex; align-items: center; justify-content: center; }
.s.first { height: 30px; color: #777; }
.s.fill { margin: -9px 0 0; }
.s.on { background: #0a80ff; color: #fff; }

.right { width: 283px; flex: none; display: flex; flex-direction: column; }
.rhead { height: 31px; flex: none; background: #e0e0e0; text-align: center; font-size: 13px; font-weight: 700; line-height: 32px; }
.rbody { flex: 1; min-height: 0; display: flex; overflow: hidden; }
.rcontent { flex: 1; padding: 15px 0 0 15px; }
.rbar { width: 9px; background: #ebebeb; }
.rthumb { height: 328px; border-radius: 4px; background: #d5d5d5; }
.now { display: flex; gap: 22px; height: 128px; }
.preview { width: 130px; height: 128px; background: #fff; outline: 1px solid #dcdcdc; outline-offset: -1px; }
.pt { fill: #222; stroke: none; text-anchor: middle; font: 10px "Liberation Sans", sans-serif; }
.pt .lg { font-size: 11px; }
.opts { display: flex; flex-direction: column; padding-top: 1px; }
.o { height: 32px; flex: none; display: flex; align-items: center; gap: 10px; color: #444; white-space: nowrap; }
.aa { width: 24px; font-size: 18px; font-weight: 600; line-height: 20px; color: #444; }
.kinds { display: flex; margin: 15px 0; }
.k { width: 62px; height: 60px; display: flex; flex-direction: column; align-items: center; gap: 10px; padding-top: 6px; }
.k svg { color: #444; }
.k.on { background: #e0e0e0; }
.add { width: 246px; height: 28px; display: grid; place-items: center; color: #333; }
.add .i { grid-area: 1 / 1; }
.gallery { margin-top: 20px; display: grid; grid-template-columns: repeat(3, 60px); gap: 10px 20px; }
.g { height: 60px; border-radius: 4px; display: flex; align-items: center; justify-content: center; }
.g.on { border: 2px solid #e0e0e0; }
.g svg { width: 36px; height: 32px; }

.status { height: 36px; flex: none; border-top: 1px solid #d4d4d4; border-bottom: 1px solid #d8d8d8; display: flex; align-items: center; }
.pg { width: 45px; height: 26px; }
.page { width: 120px; border: solid #d0d0d0; border-width: 0 1px; }
.page select { padding-left: 10px; }
.page::after { background: #666; }
.addp { width: 44px; height: 24px; }
.addp svg { width: 14px; height: 14px; }
.ptab { width: 81px; height: 24px; color: #0a80ff; font-weight: 700; border: solid #d0d0d0; border-width: 0 1px; }
.sright { margin-left: auto; padding-right: 266px; display: flex; gap: 14px; }
.fo { gap: 6px; color: #111; }
.fo svg { color: #444; }
.mark { position: absolute; right: 7px; bottom: 5px; width: 261px; height: 59px; padding-left: 2px; background: #fff; color: #000; font: 700 35px/58px "Open Sans", sans-serif; }
```
FILE: script.js
```js
const NS = 'http://www.w3.org/2000/svg';
const STEP = 960 / 25.4; // 10 mm at 96 dpi
const RULER = 17;
const ORIGIN = { x: 29, y: 34 };

function draw() {
  const svg = document.getElementById('sheet');
  const w = svg.clientWidth, h = svg.clientHeight;
  svg.replaceChildren();
  const add = (name, attrs, text) => {
    const el = document.createElementNS(NS, name);
    for (const k in attrs) el.setAttribute(k, attrs[k]);
    if (text !== undefined) el.textContent = text;
    svg.append(el);
  };
  const line = (x1, y1, x2, y2, cls) => add('line', { x1: x1 + .5, y1: y1 + .5, x2: x2 + .5, y2: y2 + .5, class: cls });
  add('rect', { width: w, height: RULER, class: 'band' });
  add('rect', { width: RULER, height: h, class: 'band' });
  add('rect', { width: RULER, height: RULER - 1, class: 'nook' });
  for (const major of [false, true]) {
    const shift = major ? 0 : STEP / 2;
    for (let i = 0; ORIGIN.x + i * STEP < w; i++) {
      const x = Math.round(ORIGIN.x + shift + i * STEP);
      line(x, major ? 0 : RULER, x, h, major ? 'major' : 'minor');
      if (!major) line(x, 9, x, RULER, 'tick');
      else add('text', { x: x + 2, y: 10 }, 60 + i * 10);
    }
    for (let i = 0; ORIGIN.y + i * STEP < h; i++) {
      const y = Math.round(ORIGIN.y + shift + i * STEP);
      line(major ? 0 : RULER, y, w, y, major ? 'major' : 'minor');
      if (!major) line(10, y, RULER, y, 'tick');
      else add('text', { transform: `translate(9 ${y + 2}) rotate(-90)`, 'text-anchor': 'end' }, 30 + i * 10);
    }
  }
  line(0, RULER - 1, w, RULER - 1, 'tick');
  line(RULER, 0, RULER, h, 'tick');
}

const COLORS = ('b01020 c8102e e8395b f8637f fa9db2 287f90 36a7bf 40c4e0 5bdcf3 a5f2ff f8562a ff7d3a ff981c ffb414 ffc860 ' +
  '10957d 12b398 1accb0 66dac4 84eddb 9b2d63 c94b8f e366ab f984c8 f3c3df 5f8a12 76a026 99c020 b3d24e d4e293 ' +
  '1f28a8 3340dc 6a42f8 9169fc ad90fa fccb00 fcd92b f1ea28 fbf64a fdfd80 9b50dd c44ce8 d26bf8 c085ff d9a5ff ' +
  '2f7f45 3fa056 50ab73 63bd88 90d9ab e6342b ff483b ff5e60 ff7a74 ff9489 2441a2 2d56d4 306af8 628bff 88aff8 ' +
  '752d04 9a3802 a94027 d25f40 e37553 1a88db 2a9bf8 40b0ff 37d0ff 66e6ff 764d36 955d41 b5704f d78660 f69a6b ' +
  '8a8077 b2ad9c cecaba e4dccc f4ecd9 1a1a1a 303030 464646 5a5a5a 7e7e7e bcbcbc cacaca d9d9d9 e6e6e6 f2f2f2 ffffff').split(' ');
const box = document.getElementById('swatches');
for (const c of COLORS) {
  const s = document.createElement('span');
  s.style.background = '#' + c;
  box.append(s);
}
draw();
addEventListener('resize', draw);
```
